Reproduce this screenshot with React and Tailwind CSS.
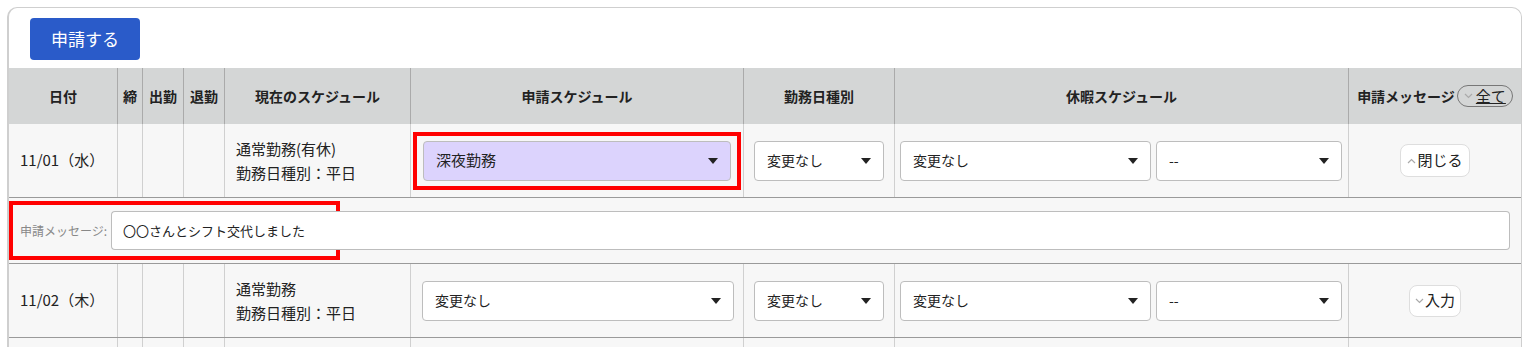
import React from "react";

const F = { fontFamily: '"Noto Sans CJK JP", "Noto Sans", sans-serif' };

const cols = "grid grid-cols-[109px_25px_41px_41px_186px_333px_151px_454px_172px]";

function Caret() {
  return (
    <svg width="10" height="6" viewBox="0 0 10 6" className="shrink-0">
      <path d="M0 0 L10 0 L5 6 Z" fill="#222" />
    </svg>
  );
}

function Select({ value, className = "", bg = "bg-white", big }) {
  return (
    <div
      className={`flex h-[40px] items-center justify-between rounded-[4px] border border-[#bdbdbd] ${bg} pl-[12px] pr-[12px] ${big ? "text-[15px]" : "text-[14px]"} text-[#222] ${className}`}
    >
      <span>{value}</span>
      <Caret />
    </div>
  );
}

function Chevron({ up }) {
  return (
    <svg width="9" height="6" viewBox="0 0 9 6" className="shrink-0">
      <path
        d={up ? "M1 5 L4.5 1.5 L8 5" : "M1 1 L4.5 4.5 L8 1"}
        fill="none"
        stroke="#aaa"
        strokeWidth="1.2"
      />
    </svg>
  );
}

function Th({ children, last }) {
  return (
    <div
      className={`flex items-center justify-center text-[14px] font-bold text-[#222] ${
        last ? "" : "border-r border-[#aaaaaa]"
      }`}
    >
      {children}
    </div>
  );
}

function Td({ children, className = "", last }) {
  return (
    <div className={`flex items-center ${last ? "" : "border-r border-[#d0d0d0]"} ${className}`}>
      {children}
    </div>
  );
}

function Row({ date, current, sched, highlight, button }) {
  return (
    <div className={`${cols} h-[74px] border-b border-[#9a9a9a] bg-[#f7f7f7] text-[14px] text-[#222]`}>
      <Td className="pl-[11px] text-[15px]">{date}</Td>
      <Td />
      <Td />
      <Td />
      <Td className="pl-[11px] text-[15px]">
        <div className="leading-[24px]">
          <div>{current}</div>
          <div>勤務日種別：平日</div>
        </div>
      </Td>
      <Td className="px-[2px]">
        {highlight ? (
          <div className="w-full border-[4px] border-[#ff0000] px-[6px] py-[5px]">
            <Select value={sched} bg="bg-[#dcd3fd]" big />
          </div>
        ) : (
          <Select value={sched} className="ml-[9px] w-[312px]" />
        )}
      </Td>
      <Td className="pl-[10px]">
        <Select value="変更なし" className="w-[130px]" />
      </Td>
      <Td className="gap-[5px] pl-[5px]">
        <Select value="変更なし" className="w-[251px]" />
        <Select value="--" className="w-[186px]" />
      </Td>
      <Td last className="justify-center">
        {button}
      </Td>
    </div>
  );
}

export default function App() {
  return (
    <div style={F} className="bg-white pl-[7px] pt-[7px]">
      <div className="w-[1515px] overflow-hidden rounded-t-[10px] border-t border-r border-l-2 border-[#cfcfcf]">
        <div className="pl-[21px] pt-[10px] pb-[8px]">
          <button className="h-[42px] w-[110px] rounded-[4px] bg-[#2a5bc9] text-[17px] text-white">
            申請する
          </button>
        </div>
        <div className={`${cols} h-[56px] bg-[#d4d6d6]`}>
          <Th>日付</Th>
          <Th>締</Th>
          <Th>出勤</Th>
          <Th>退勤</Th>
          <Th>現在のスケジュール</Th>
          <Th>申請スケジュール</Th>
          <Th>勤務日種別</Th>
          <Th>休暇スケジュール</Th>
          <Th last>
            <div className="flex items-center gap-[2px]">
              <span>申請メッセージ</span>
              <span className="flex h-[22px] items-center gap-[3px] rounded-full border border-[#777] px-[6px] text-[15px] font-normal">
                <Chevron />
                <span className="underline">全て</span>
              </span>
            </div>
          </Th>
        </div>
        <Row
          date="11/01（水）"
          current="通常勤務(有休)"
          sched="深夜勤務"
          highlight
          button={
            <button className="flex h-[33px] items-center gap-[1px] rounded-[8px] border border-[#dedede] bg-white px-[6px] text-[15px] text-[#222]">
              <Chevron up />
              閉じる
            </button>
          }
        />
        <div className="flex h-[66px] items-center border-b border-[#9a9a9a] bg-[#f7f7f7] pr-[11px]">
          <div className="flex flex-1 items-center">
            <div className="flex h-[59px] items-center border-[4px] border-[#ff0000] pl-[7px] pr-0">
              <span className="w-[91px] text-[12px] text-[#888]">申請メッセージ:</span>
              <div className="flex h-[39px] w-[225px] items-center rounded-l-[4px] border-y border-l border-[#bdbdbd] bg-white pl-[11px] text-[13px] text-[#222]">
                〇〇さんとシフト交代しました
              </div>
            </div>
            <div className="-ml-[4px] h-[39px] flex-1 rounded-r-[4px] border-y border-r border-[#bdbdbd] bg-white" />
          </div>
        </div>
        <Row
          date="11/02（木）"
          current="通常勤務"
          sched="変更なし"
          button={
            <button className="flex h-[32px] items-center gap-[1px] rounded-[8px] border border-[#dedede] bg-white px-[5px] text-[15px] text-[#222]">
              <Chevron />
              入力
            </button>
          }
        />
        <div className={`${cols} h-[20px] bg-[#f7f7f7]`}>
          <Td />
          <Td />
          <Td />
          <Td />
          <Td />
          <Td />
          <Td />
          <Td />
          <Td last />
        </div>
      </div>
    </div>
  );
}
